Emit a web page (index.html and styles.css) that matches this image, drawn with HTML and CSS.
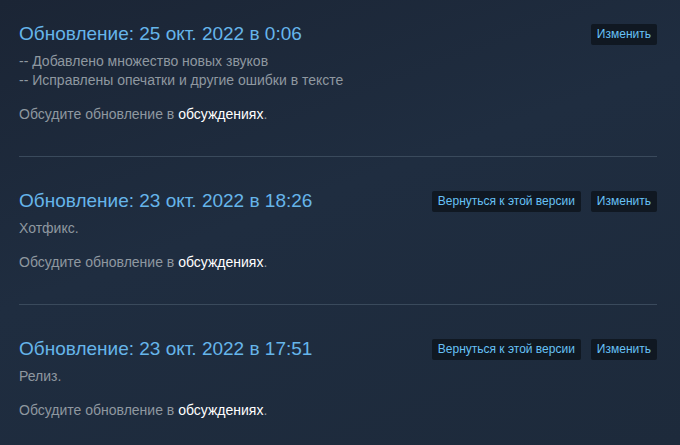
FILE: index.html
```html
<!DOCTYPE html>
<html>
<head>
    <title>Журнал изменений</title>
    <link rel="stylesheet" href="styles.css">
</head>
<body>
    <div class="changelog">
        <div class="update first">
            <div class="update-head">
                <div class="update-title">Обновление: 25 окт. 2022 в 0:06</div>
                <div class="update-actions">
                    <a class="btn" href="#">Изменить</a>
                </div>
            </div>
            <div class="update-body">
                <p>-- Добавлено множество новых звуков<br>-- Исправлены опечатки и другие ошибки в тексте</p>
                <p class="discuss">Обсудите обновление в <a href="#">обсуждениях</a>.</p>
            </div>
        </div>

        <div class="update">
            <div class="update-head">
                <div class="update-title">Обновление: 23 окт. 2022 в 18:26</div>
                <div class="update-actions">
                    <a class="btn" href="#">Вернуться к этой версии</a>
                    <a class="btn" href="#">Изменить</a>
                </div>
            </div>
            <div class="update-body">
                <p>Хотфикс.</p>
                <p class="discuss">Обсудите обновление в <a href="#">обсуждениях</a>.</p>
            </div>
        </div>

        <div class="update last">
            <div class="update-head">
                <div class="update-title">Обновление: 23 окт. 2022 в 17:51</div>
                <div class="update-actions">
                    <a class="btn" href="#">Вернуться к этой версии</a>
                    <a class="btn" href="#">Изменить</a>
                </div>
            </div>
            <div class="update-body">
                <p>Релиз.</p>
                <p class="discuss">Обсудите обновление в <a href="#">обсуждениях</a>.</p>
            </div>
        </div>
    </div>
</body>
</html>
```

FILE: styles.css
```css
html, body {
    margin: 0;
    height: 100%;
}

body {
    font-family: "Liberation Sans", Arial, sans-serif;
    background: linear-gradient(160deg, #1b2535 0%, #1f2d40 45%, #1d2a3b 100%);
    color: #8f98a0;
    overflow: hidden;
}

.changelog {
    padding: 0 23px 0 19px;
}

.update {
    padding: 32px 0 32px;
    border-bottom: 1px solid #3a4a5c;
}

.update.first {
    padding-top: 22px;
}

.update.last {
    border-bottom: none;
}

.update-head {
    display: flex;
    align-items: center;
    justify-content: space-between;
}

.update-title {
    font-size: 19px;
    line-height: 24px;
    color: #66b5ea;
}

.update-actions {
    display: flex;
    gap: 10px;
}

.btn {
    display: block;
    padding: 0 6px;
    height: 21px;
    line-height: 21px;
    font-size: 12px;
    color: #67c1f5;
    background: #101822;
    border-radius: 2px;
    text-decoration: none;
}

.update-body {
    margin-top: 6px;
    font-size: 14px;
    line-height: 19px;
}

.update-body p {
    margin: 0;
}

.update-body .discuss {
    margin-top: 15px;
}

.discuss a {
    color: #ffffff;
    text-decoration: none;
}
```
